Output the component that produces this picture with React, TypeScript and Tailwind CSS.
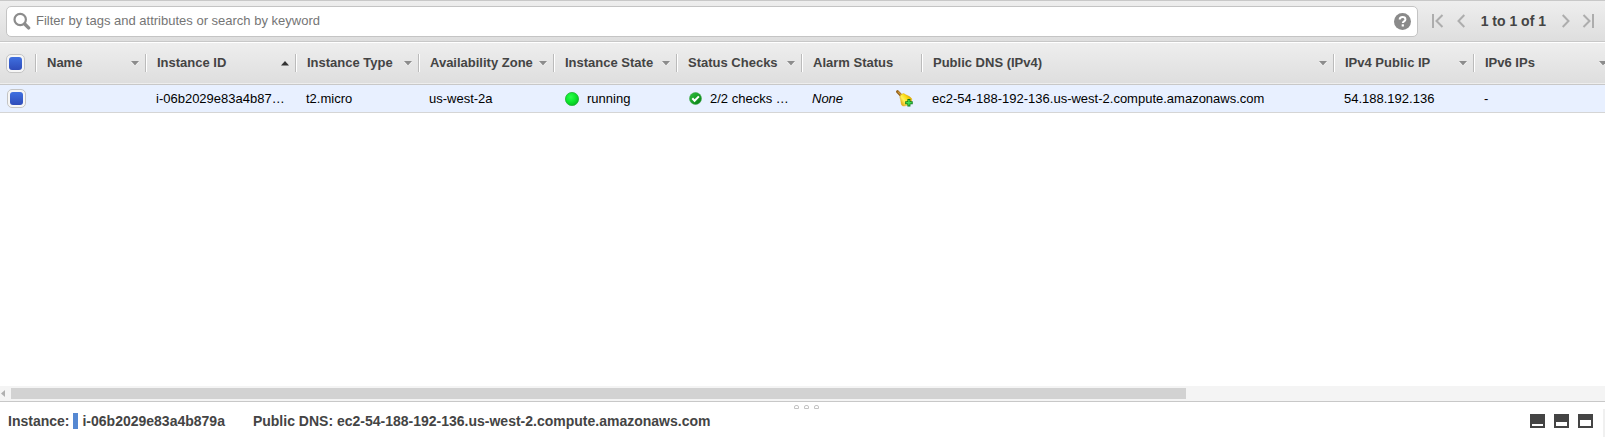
import type { ReactNode } from "react";

const INSTANCE_ID = "i-06b2029e83a4b879a";
const DNS = "ec2-54-188-192-136.us-west-2.compute.amazonaws.com";

type Sort = "none" | "menu" | "asc";

const columns: { label: string; width: string; sort: Sort }[] = [
  { label: "Name", width: "w-[110px]", sort: "menu" },
  { label: "Instance ID", width: "w-[150px]", sort: "asc" },
  { label: "Instance Type", width: "w-[123px]", sort: "menu" },
  { label: "Availability Zone", width: "w-[135px]", sort: "menu" },
  { label: "Instance State", width: "w-[123px]", sort: "menu" },
  { label: "Status Checks", width: "w-[125px]", sort: "menu" },
  { label: "Alarm Status", width: "w-[120px]", sort: "none" },
  { label: "Public DNS (IPv4)", width: "w-[412px]", sort: "menu" },
  { label: "IPv4 Public IP", width: "w-[140px]", sort: "menu" },
  { label: "IPv6 IPs", width: "w-[140px]", sort: "menu" },
];

function Checkbox({ label }: { label: string }) {
  return (
    <input
      type="checkbox"
      defaultChecked
      aria-label={label}
      className="block size-[19px] appearance-none rounded-[5px] border border-[#c4c4c4] bg-[#f6f6f6] p-[2px] before:block before:size-[13px] before:rounded-[3px] before:content-[''] checked:before:bg-linear-to-b checked:before:from-[#4070e0] checked:before:to-[#2f4cba]"
    />
  );
}

function SortArrow({ sort }: { sort: Sort }) {
  if (sort === "none") return null;
  return (
    <svg width="8" height="5" viewBox="0 0 8 5" aria-hidden="true" className="shrink-0">
      {sort === "asc" ? (
        <path d="M0 4.5 4 0l4 4.5z" fill="#333" />
      ) : (
        <>
          <path d="M0 1h8L4 5z" fill="#fff" />
          <path d="M0 0h8L4 4.5z" fill="#8c8c8c" />
        </>
      )}
    </svg>
  );
}

function SearchIcon() {
  return (
    <svg width="18" height="18" viewBox="0 0 18 18" fill="none" stroke="#8c8c8c" aria-hidden="true" className="shrink-0">
      <circle cx="7.2" cy="7.5" r="5.7" strokeWidth="2.2" />
      <path d="m11.700 12 3.900 3.900" strokeWidth="3.4" strokeLinecap="round" />
    </svg>
  );
}

function PageButton({ label, width, children }: { label: string; width: string; children: ReactNode }) {
  return (
    <button type="button" aria-label={label} className={"h-[14px] shrink-0 " + width}>
      <svg width="100%" height="14" fill="none" stroke="#adadad" strokeWidth="2" aria-hidden="true">
        {children}
      </svg>
    </button>
  );
}

function RunningIcon() {
  return (
    <svg width="14" height="14" viewBox="0 0 14 14" aria-hidden="true" className="shrink-0">
      <defs>
        <radialGradient id="running" cx="40%" cy="35%" r="65%">
          <stop offset="0" stopColor="#2cff4c" />
          <stop offset="0.6" stopColor="#0be62c" />
          <stop offset="1" stopColor="#08c024" />
        </radialGradient>
      </defs>
      <circle cx="7" cy="7" r="6.6" fill="url(#running)" stroke="#22b536" strokeWidth="0.8" />
    </svg>
  );
}

function CheckIcon() {
  return (
    <svg width="13" height="13" viewBox="0 0 13 13" aria-hidden="true" className="shrink-0">
      <defs>
        <linearGradient id="passed" x1="0" y1="0" x2="1" y2="1">
          <stop offset="0" stopColor="#2fc23d" />
          <stop offset="1" stopColor="#067a13" />
        </linearGradient>
      </defs>
      <circle cx="6.5" cy="6.5" r="6" fill="url(#passed)" stroke="#3fa84b" strokeWidth="0.6" />
      <path d="m3.3 6.3 2.3 2.5 4.3-4.4" fill="none" stroke="#fff" strokeWidth="2" />
    </svg>
  );
}

function AlarmIcon() {
  return (
    <svg width="17" height="17" viewBox="0 0 17 17" aria-hidden="true" className="block">
      <defs>
        <linearGradient id="bell" x1="0.1" y1="0.8" x2="0.9" y2="0.2">
          <stop offset="0" stopColor="#e0aa10" />
          <stop offset="0.35" stopColor="#fff25a" />
          <stop offset="0.65" stopColor="#fbdc10" />
          <stop offset="1" stopColor="#dba008" />
        </linearGradient>
      </defs>
      <path d="m1.600 1.700 3.800 4" stroke="#94601a" strokeWidth="3" strokeLinecap="round" />
      <path d="m1.800 1.600 3.600 3.600" stroke="#d09a38" strokeWidth="1.100" />
      <path d="M3.800 7C4.400 5 6 3.700 7.800 3.600c1.800 1.800 5.400 2 7.600 4.600 1 1.600-.2 3.800-2.200 5.600-2 1.700-5.200 2.800-7 1.800C4.600 14 5.200 10 3.800 7z" fill="url(#bell)" stroke="#e0ac14" strokeWidth="0.5" />
      <path d="M11.400 9h3v2.200h2.300v3h-2.300v2.300h-3v-2.300H9.200v-3h2.200z" fill="#087a14" />
      <path d="M12.900 10v5.500M10.200 12.700h5.500" stroke="#42e052" strokeWidth="1.400" />
    </svg>
  );
}

function PanelButton({ label, top, height }: { label: string; top: number; height: number }) {
  return (
    <button type="button" aria-label={label}>
      <svg width="15" height="14" viewBox="0 0 15 14" aria-hidden="true" className="block">
        <path d="M0 0h15v14H0z" fill="#444" />
        <rect x="2" y={top} width="11" height={height} fill="#fff" />
      </svg>
    </button>
  );
}

function Cell({ children }: { children?: ReactNode }) {
  return (
    <td className="p-0">
      <div className="flex items-center pt-px pr-2 pl-[11px] whitespace-nowrap">{children}</div>
    </td>
  );
}

export default function App() {
  return (
    <div className="flex h-screen flex-col overflow-hidden bg-white font-['Liberation_Sans',Arial,sans-serif] text-[13px] leading-4 text-black">
      <div className="flex h-[42px] shrink-0 items-center border-y border-[#c8c8c8] bg-linear-to-b from-[#eeeeee] to-[#dedede] pr-[11px] pl-[6px]">
        <label className="flex h-[31px] flex-1 items-center gap-[5px] rounded-[5px] border border-[#c4c4c4] bg-white px-[6px]">
          <SearchIcon />
          <input
            type="text"
            aria-label="Filter instances"
            placeholder="Filter by tags and attributes or search by keyword"
            className="min-w-0 flex-1 bg-transparent outline-none placeholder:text-[#757575]"
          />
          <button type="button" aria-label="Help" className="shrink-0">
            <svg width="17" height="17" viewBox="0 0 17 17" aria-hidden="true" className="block">
              <circle cx="8.500" cy="8.500" r="8.500" fill="#8a8a8a" />
              <path d="M5.700 6.600c0-1.700 1.200-2.500 2.800-2.500s2.900.8 2.900 2.300c0 2-2.600 1.900-2.600 3.700" fill="none" stroke="#fff" strokeWidth="2" />
              <path d="M7.700 11.300h2.200v2.200H7.700z" fill="#fff" />
            </svg>
          </button>
        </label>
        <nav aria-label="Pages" className="flex items-center pl-[14px]">
          <PageButton label="First page" width="w-[12px]">
            <path d="M1 0v14M10.500 1 4.500 7l6 6" />
          </PageButton>
          <span className="w-[13px]" />
          <PageButton label="Previous page" width="w-[8px]">
            <path d="M7.300 1 1.500 7l5.800 6" />
          </PageButton>
          <span className="px-4 text-sm font-bold whitespace-nowrap text-[#444]">1 to 1 of 1</span>
          <PageButton label="Next page" width="w-[8px]">
            <path d="m.7 1 5.800 6-5.800 6" />
          </PageButton>
          <span className="w-3" />
          <PageButton label="Last page" width="w-[12px]">
            <path d="M11 0v14M1.500 1l6 6-6 6" />
          </PageButton>
        </nav>
      </div>

      <main className="min-h-0 flex-1 overflow-hidden border-t border-white">
        <table className="w-full min-w-[1613px] table-fixed border-collapse text-left">
          <thead>
            <tr className="h-[41px] border-b border-[#c8c8c8] bg-linear-to-b from-[#eeeeee] to-[#dedede]">
              <th className="w-[35px] p-0 pl-[6px]">
                <Checkbox label="Select all instances" />
              </th>
              {columns.map((c) => (
                <th key={c.label} scope="col" className={"p-0 font-bold text-[#444] " + c.width}>
                  <div className="flex h-[18px] items-center justify-between border-l border-[#bbb] pr-[6px] pl-[11px] whitespace-nowrap shadow-[inset_1px_0_0_#fff]">
                    {c.label}
                    <SortArrow sort={c.sort} />
                  </div>
                </th>
              ))}
            </tr>
          </thead>
          <tbody>
            <tr className="h-7 border-b border-[#d5d5d5] bg-[#e8f0ff]">
              <td className="p-0 pl-[7px]">
                <Checkbox label={"Select " + INSTANCE_ID} />
              </td>
              <Cell />
              <Cell>i-06b2029e83a4b87…</Cell>
              <Cell>t2.micro</Cell>
              <Cell>us-west-2a</Cell>
              <Cell>
                <span className="flex items-center gap-2 pl-px">
                  <RunningIcon />
                  running
                </span>
              </Cell>
              <Cell>
                <span className="flex items-center gap-2 pl-[2px]">
                  <CheckIcon />
                  2/2 checks …
                </span>
              </Cell>
              <Cell>
                <span className="flex-1 italic">None</span>
                <button type="button" aria-label="Add alarm">
                  <AlarmIcon />
                </button>
              </Cell>
              <Cell>{DNS}</Cell>
              <Cell>54.188.192.136</Cell>
              <Cell>-</Cell>
            </tr>
          </tbody>
        </table>
      </main>

      <div className="flex h-[15px] shrink-0 items-center bg-[#f4f4f4]">
        <svg width="11" height="7" viewBox="0 0 11 7" aria-hidden="true" className="shrink-0">
          <path d="M5 0v7L1 3.500z" fill="#b0b0b0" />
        </svg>
        <div className="h-[11px] w-[73.2%] bg-[#d2d2d2]" />
      </div>

      <footer className="flex h-9 shrink-0 flex-col border-t border-[#c8c8c8]">
        <div className="flex h-[7px] items-end justify-center gap-[5px] pl-2" aria-hidden="true">
          {[0, 1, 2].map((n) => (
            <span key={n} className="h-1 w-[5px] rounded-t-[2px] border border-[#c4c4c4]" />
          ))}
        </div>
        <div className="flex flex-1 items-center border-r-2 border-[#f0f0f0] pr-[10px] pb-[5px] pl-2 text-sm leading-4 font-bold text-[#444]">
          <span>Instance:</span>
          <span className="mr-1 ml-1 h-4 w-[5px] bg-[#5588d2]" />
          <span>{INSTANCE_ID}</span>
          <span className="ml-7">Public DNS: {DNS}</span>
          <div className="ml-auto flex gap-[9px]">
            <PanelButton label="Minimize details" top={10} height={2} />
            <PanelButton label="Split details" top={8} height={4} />
            <PanelButton label="Maximize details" top={6} height={6} />
          </div>
        </div>
      </footer>
    </div>
  );
}
